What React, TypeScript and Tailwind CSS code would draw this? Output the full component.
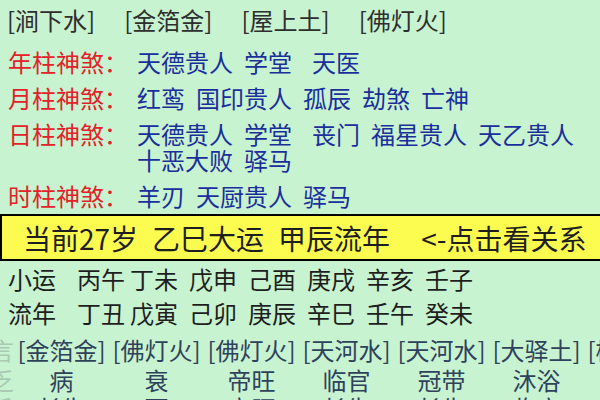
import React from 'react';

const nayinTop = ['[涧下水]', '[金箔金]', '[屋上土]', '[佛灯火]'];

const shensha = [
  { label: '年柱神煞：', lines: [['天德贵人', '学堂', '天医']] },
  { label: '月柱神煞：', lines: [['红鸾', '国印贵人', '孤辰', '劫煞', '亡神']] },
  { label: '日柱神煞：', lines: [['天德贵人', '学堂', '丧门', '福星贵人', '天乙贵人'], ['十恶大败', '驿马']] },
  { label: '时柱神煞：', lines: [['羊刃', '天厨贵人', '驿马']] },
];

const xiaoyun = ['丙午', '丁未', '戊申', '己酉', '庚戌', '辛亥', '壬子'];
const liunian = ['丁丑', '戊寅', '己卯', '庚辰', '辛巳', '壬午', '癸未'];

const nayinRow = ['[金箔金]', '[佛灯火]', '[佛灯火]', '[天河水]', '[天河水]', '[大驿土]', '[杨柳木]'];
const xingyun = ['病', '衰', '帝旺', '临官', '冠带', '沐浴', '长生'];
const zizuo = ['长生', '死', '帝旺', '长生', '长生', '临官', '胎'];

function PillarRow({ head, items }: { head: string; items: string[] }) {
  return (
    <div className="flex h-[28px] items-center pl-[8px] text-[24px] leading-[28px] text-[#1e1e1e]">
      <span className="w-[69px] shrink-0">{head}</span>
      {items.map((it, i) => (
        <span key={i} className={i === 0 ? '' : i === 1 ? 'ml-[5px]' : 'ml-[11px]'}>
          {it}
        </span>
      ))}
    </div>
  );
}

export default function App() {
  return (
    <div
      className="h-[400px] w-[600px] overflow-hidden bg-[#c8f3d0]"
      style={{ fontFamily: '"Noto Sans CJK SC", "Noto Sans", sans-serif' }}
    >
      {/* 纳音 */}
      <div className="flex gap-[29px] pl-[7px] pt-[6px] text-[24px] leading-[28px] text-[#2e2e2e]">
        {nayinTop.map((n) => (
          <span key={n}>{n}</span>
        ))}
      </div>

      {/* 神煞 */}
      <div className="mt-[15px] flex flex-col gap-[10px]">
        {shensha.map((s) => (
          <div key={s.label} className="flex pl-[8px] text-[24px] leading-[26px]">
            <span className="w-[129px] shrink-0 text-[#e22129]">{s.label}</span>
            <div className="flex flex-col text-[#1b2f9c]">
              {s.lines.map((line, li) => (
                <div key={li} className="flex">
                  {line.map((v, vi) => (
                    <span
                      key={vi}
                      className={vi === 0 ? '' : line[vi - 1] === '学堂' ? 'ml-[20px]' : 'ml-[11px]'}
                    >
                      {v}
                    </span>
                  ))}
                </div>
              ))}
            </div>
          </div>
        ))}
      </div>

      {/* 大运条 */}
      <div className="mt-[5px] flex h-[47px] items-center whitespace-nowrap border-y-2 border-l-2 border-black bg-[#fcfc50] pl-[21px] text-[28px] text-[#1e1e1e]">
        <span>当前27岁</span>
        <span className="ml-[14px]">乙巳大运</span>
        <span className="ml-[14px]">甲辰流年</span>
        <span className="ml-[31px]">{'<-'}点击看关系</span>
      </div>

      <div className="mt-[4px]">
        <PillarRow head="小运" items={xiaoyun} />
      </div>
      <div className="mt-[6px]">
        <PillarRow head="流年" items={liunian} />
      </div>

      {/* 纳音 / 星运 */}
      <div className="mt-[9px] flex text-[24px] leading-[28px]">
        <div className="flex w-[14px] shrink-0 flex-col items-end overflow-hidden text-[#a9c9b2]">
          <span className="whitespace-nowrap">言</span>
          <span className="mt-[2px] whitespace-nowrap">乏</span>
          <span className="whitespace-nowrap">壬</span>
        </div>
        <div className="grid grid-cols-[repeat(7,95px)] text-[#2f425c]">
          {nayinRow.map((n, i) => (
            <span key={'n' + i} className="text-center whitespace-nowrap">
              {n}
            </span>
          ))}
          {xingyun.map((n, i) => (
            <span key={'x' + i} className="mt-[2px] text-center">
              {n}
            </span>
          ))}
          {zizuo.map((n, i) => (
            <span key={'z' + i} className="text-center">
              {n}
            </span>
          ))}
        </div>
      </div>
    </div>
  );
}
